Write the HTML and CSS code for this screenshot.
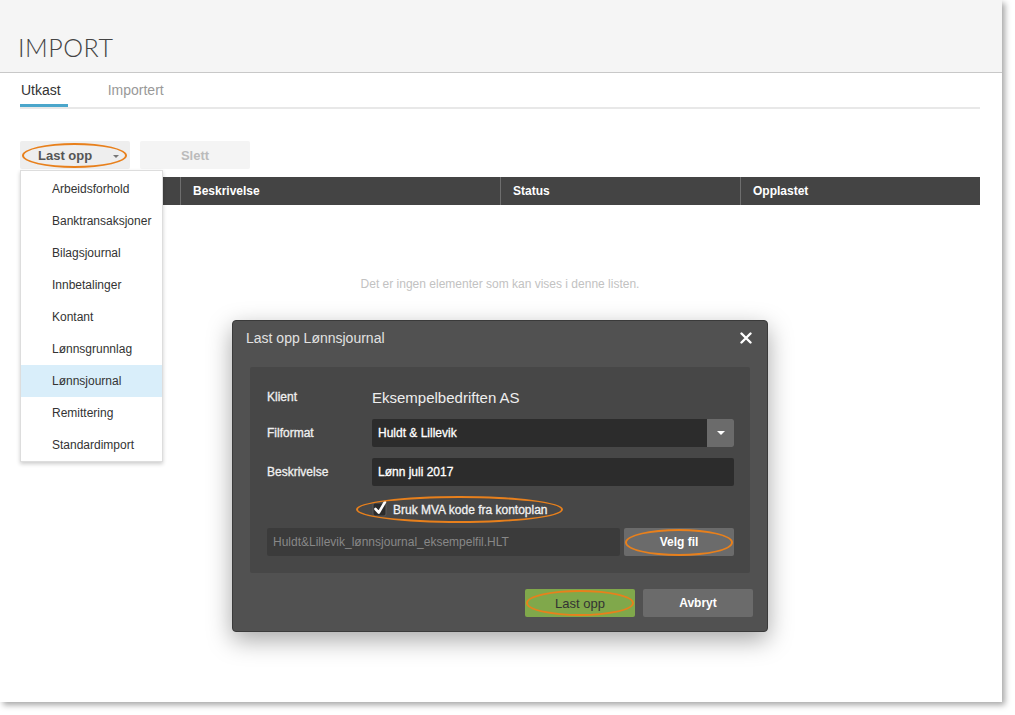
FILE: index.html
```html
<!DOCTYPE html>
<html lang="no">
<head>
    <meta charset="UTF-8">
    <title>Import</title>
    <link rel="stylesheet" href="styles.css">
</head>
<body>
    <div class="screen">
        <header class="page-head">
            <h1>IMPORT</h1>
        </header>

        <main class="content">
            <nav class="tabs">
                <a class="tab active">Utkast</a>
                <a class="tab">Importert</a>
            </nav>

            <div class="toolbar">
                <div class="upload-wrap">
                    <button class="btn-upload">Last opp <span class="caret"></span></button>
                    <span class="mark"></span>
                    <ul class="menu">
                        <li>Arbeidsforhold</li>
                        <li>Banktransaksjoner</li>
                        <li>Bilagsjournal</li>
                        <li>Innbetalinger</li>
                        <li>Kontant</li>
                        <li>Lønnsgrunnlag</li>
                        <li class="selected">Lønnsjournal</li>
                        <li>Remittering</li>
                        <li>Standardimport</li>
                    </ul>
                </div>
                <button class="btn-delete">Slett</button>
            </div>

            <div class="list">
                <div class="list-head">
                    <div class="col col-check"></div>
                    <div class="col col-desc">Beskrivelse</div>
                    <div class="col col-status">Status</div>
                    <div class="col col-date">Opplastet</div>
                </div>
                <p class="empty">Det er ingen elementer som kan vises i denne listen.</p>
            </div>
        </main>

        <div class="modal">
            <div class="modal-head">
                <span class="modal-title">Last opp Lønnsjournal</span>
                <svg class="close" width="12" height="12" viewBox="0 0 12 12">
                    <path d="M1.5 1.5 L10.5 10.5 M10.5 1.5 L1.5 10.5" stroke="#fff" stroke-width="2.4" stroke-linecap="round"/>
                </svg>
            </div>

            <div class="panel">
                <div class="row">
                    <label>Klient</label>
                    <span class="client">Eksempelbedriften AS</span>
                </div>
                <div class="row row-format">
                    <label>Filformat</label>
                    <div class="select">
                        <span class="select-value">Huldt &amp; Lillevik</span>
                        <span class="select-btn"><span class="caret caret-white"></span></span>
                    </div>
                </div>
                <div class="row row-desc">
                    <label>Beskrivelse</label>
                    <div class="field">Lønn juli 2017</div>
                </div>
                <div class="row row-check">
                    <label></label>
                    <div class="check">
                        <svg width="16" height="18" viewBox="0 0 16 18">
                            <rect x="1" y="4" width="13" height="13" rx="2" fill="#2b2b2b" stroke="#5a5a5a"/>
                            <path d="M3.5 10 L6.8 13.5 L13 3" fill="none" stroke="#fff" stroke-width="2.6" stroke-linecap="round" stroke-linejoin="round"/>
                        </svg>
                        <span>Bruk MVA kode fra kontoplan</span>
                        <span class="mark"></span>
                    </div>
                </div>
                <div class="row row-file">
                    <div class="file-name">Huldt&amp;Lillevik_lønnsjournal_eksempelfil.HLT</div>
                    <button class="btn-pick">Velg fil<span class="mark"></span></button>
                </div>
            </div>

            <div class="modal-foot">
                <button class="btn-ok">Last opp<span class="mark"></span></button>
                <button class="btn-cancel">Avbryt</button>
            </div>
        </div>
    </div>
</body>
</html>
```

FILE: styles.css
```css
body {
    margin: 0;
    min-height: 715px;
    background-color: #fff;
    font-family: 'Liberation Sans', Arial, sans-serif;
    font-size: 12px;
    color: #333;
}

button {
    font-family: inherit;
    border: none;
    cursor: pointer;
}

.screen {
    position: relative;
    width: 1002px;
    height: 702px;
    background-color: #fff;
    box-shadow: 3px 3px 6px rgba(0, 0, 0, 0.35);
    overflow: hidden;
}

/* page title bar */
.page-head {
    height: 72px;
    background-color: #f5f5f5;
    border-bottom: 1px solid #c8c8c8;
    display: flex;
    align-items: flex-end;
    padding-left: 18px;
}

.page-head h1 {
    margin: 0 0 10px;
    font-family: 'Lato', sans-serif;
    font-weight: 300;
    font-size: 25px;
    letter-spacing: 0.5px;
    color: #444;
}

.content {
    padding: 0 22px 0 20px;
}

/* tabs */
.tabs {
    display: flex;
    border-bottom: 2px solid #e8e8e8;
}

.tab {
    padding: 9px 7px 6px 1px;
    font-size: 14px;
    line-height: 16px;
    color: #999;
    border-bottom: 3px solid transparent;
}

.tab + .tab {
    margin-left: 39px;
}

.tab.active {
    color: #333;
    border-bottom-color: #4ba6cb;
}

/* buttons above the list */
.toolbar {
    display: flex;
    gap: 10px;
    margin-top: 32px;
}

.upload-wrap {
    position: relative;
}

.btn-upload, .btn-delete {
    width: 110px;
    height: 28px;
    border-radius: 2px;
    font-size: 13px;
    font-weight: bold;
}

.btn-upload {
    background-color: #eeeeee;
    color: #555;
    text-align: left;
    padding-left: 18px;
    padding-top: 2px;
}

.btn-upload .caret {
    position: absolute;
    left: 93px;
    top: 14px;
}

.btn-delete {
    background-color: #f4f4f4;
    color: #bbb;
    padding-top: 2px;
}

.caret {
    display: inline-block;
    width: 0;
    height: 0;
    border-left: 3px solid transparent;
    border-right: 3px solid transparent;
    border-top: 3px solid #777;
}

.caret-white {
    border-left-width: 4px;
    border-right-width: 4px;
    border-top: 4px solid #fff;
}

/* orange highlight rings */
.mark {
    position: absolute;
    border: 2px solid #e8801c;
    border-radius: 50%;
    pointer-events: none;
}

.upload-wrap .mark {
    left: 2px;
    top: 2px;
    width: 101px;
    height: 21px;
}

/* upload type menu */
.menu {
    position: absolute;
    left: 0;
    top: 29px;
    z-index: 2;
    width: 141px;
    margin: 0;
    padding: 2px 0 0;
    list-style: none;
    background-color: #fff;
    border: 1px solid #ddd;
    box-shadow: 0 2px 4px rgba(0, 0, 0, 0.2);
}

.menu li {
    height: 32px;
    line-height: 32px;
    padding-left: 31px;
    font-size: 12px;
    color: #333;
}

.menu li.selected {
    background-color: #d9eefa;
}

/* list */
.list {
    margin-top: 8px;
}

.list-head {
    display: flex;
    height: 28px;
    background-color: #444;
}

.col {
    line-height: 28px;
    padding-left: 12px;
    font-weight: bold;
    color: #fff;
    box-sizing: border-box;
}

.col + .col {
    border-left: 1px solid #6e6e6e;
}

.col-check { width: 160px; }
.col-desc { width: 320px; }
.col-status { width: 240px; }
.col-date { width: 240px; }

.empty {
    margin: 72px 0 0;
    text-align: center;
    color: #c2c2c2;
}

/* upload dialog */
.modal {
    position: absolute;
    left: 232px;
    top: 320px;
    width: 536px;
    height: 312px;
    box-sizing: border-box;
    background-color: #515151;
    border: 1px solid #3a3a3a;
    border-radius: 4px;
    box-shadow: 0 8px 24px rgba(0, 0, 0, 0.35);
}

.modal-head {
    display: flex;
    justify-content: space-between;
    align-items: center;
    height: 34px;
    padding: 0 15px 0 13px;
}

.modal-title {
    font-size: 14px;
    color: #e2e2e2;
}

.panel {
    margin: 12px 17px 0;
    padding: 17px 16px 17px 17px;
    background-color: #474747;
    border-radius: 2px;
}

.row {
    display: flex;
    align-items: center;
    height: 28px;
}

/* light text on the dark panel renders a little heavier */
.row label, .select, .field, .check {
    -webkit-text-stroke: 0.3px currentColor;
}

.row label {
    width: 105px;
    flex: none;
    color: #f0f0f0;
}

.row:first-child {
    height: 26px;
}

.client {
    font-size: 15px;
    color: #eee;
}

.row-format { margin-top: 9px; }
.row-desc { margin-top: 11px; }
.row-check { margin-top: 10px; }
.row-file { margin-top: 4px; gap: 4px; }

.select, .field {
    flex: 1;
    display: flex;
    align-items: center;
    height: 28px;
    background-color: #2c2c2c;
    border-radius: 2px;
    color: #fff;
}

.select-value, .field {
    padding-left: 6px;
}

.select-value {
    flex: 1;
}

.select-btn {
    width: 27px;
    height: 28px;
    display: flex;
    align-items: center;
    justify-content: center;
    background-color: #6b6b6b;
    border-radius: 0 2px 2px 0;
}

.check {
    position: relative;
    display: flex;
    align-items: center;
    gap: 5px;
    color: #f2f2f2;
}

.check svg {
    margin-top: -4px;
}

.check .mark {
    left: -16px;
    right: -15px;
    top: -7px;
    bottom: -6px;
    -webkit-text-stroke: 0;
}

.file-name {
    flex: 1;
    height: 28px;
    line-height: 28px;
    padding-left: 6px;
    background-color: #3b3b3b;
    border-radius: 2px;
    color: #888;
}

.btn-pick, .btn-ok, .btn-cancel {
    position: relative;
    width: 110px;
    height: 28px;
    border-radius: 2px;
    font-size: 12px;
}

.btn-pick {
    background-color: #6b6b6b;
    color: #fff;
    font-weight: bold;
}

.btn-pick .mark {
    left: 1px;
    right: 1px;
    top: 1px;
    bottom: 0;
}

.modal-foot {
    display: flex;
    justify-content: flex-end;
    gap: 8px;
    margin-top: 16px;
    padding-right: 14px;
}

.btn-ok {
    background-color: #80a84b;
    color: #333;
    font-size: 13px;
}

.btn-ok .mark {
    left: 1px;
    right: 1px;
    top: 1px;
    bottom: 1px;
}

.btn-cancel {
    background-color: #6b6b6b;
    color: #fff;
    font-weight: bold;
}
```
